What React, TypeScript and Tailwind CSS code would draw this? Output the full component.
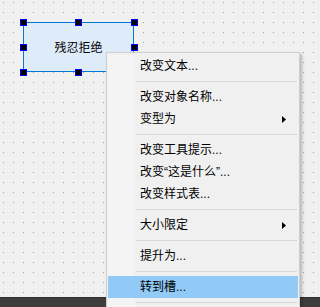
const Sep = () => (
  <div className="flex h-[9px] items-center pl-[28px] pr-[1px]">
    <div className="h-px w-full bg-[#d7d7d7]" />
  </div>
);

const Item = ({
  label,
  sub,
  active,
}: {
  label: string;
  sub?: boolean;
  active?: boolean;
}) => (
  <div
    className={`flex h-[22px] items-center justify-between pl-[32px] pr-[12px] ${
      active ? "bg-[#91c9f7]" : ""
    }`}
  >
    <span className="leading-none">{label}</span>
    {sub ? (
      <svg width="4" height="7" viewBox="0 0 4 7">
        <path d="M0 0 L4 3.5 L0 7 Z" fill="#000" />
      </svg>
    ) : null}
  </div>
);

const Handle = ({ x, y }: { x: string; y: string }) => (
  <div
    className={`absolute h-[7px] w-[7px] border border-[#0000ff] bg-black ${x} ${y}`}
  />
);

const App = () => {
  return (
    <div className="flex h-[307px] w-[320px] flex-col overflow-hidden bg-[#f0f0f0] font-['Liberation_Sans','Noto_Sans_CJK_SC',sans-serif] text-[12px] text-black">
      <div className="relative flex-1 bg-[image:conic-gradient(at_1px_1px,transparent_75%,#a0a0a0_0)] bg-[length:10px_10px] bg-[position:3px_2px]">
        <div className="absolute left-[23px] top-[22px] flex h-[50px] w-[111px] items-center justify-center border border-[#0078d7] bg-[#deecf9]">
          <span className="font-['Noto_Sans_CJK_SC',sans-serif] text-[12px]">
            残忍拒绝
          </span>
        </div>
        <Handle x="left-[20px]" y="top-[19px]" />
        <Handle x="left-[75px]" y="top-[19px]" />
        <Handle x="left-[131px]" y="top-[19px]" />
        <Handle x="left-[20px]" y="top-[44px]" />
        <Handle x="left-[131px]" y="top-[44px]" />
        <Handle x="left-[20px]" y="top-[69px]" />
        <Handle x="left-[75px]" y="top-[69px]" />
        <Handle x="left-[131px]" y="top-[69px]" />

        <div className="absolute left-[106px] top-[52px] z-10 h-[270px] w-[194px] border border-[#cfcfcf] bg-[#f0f0f0] px-[1px] pt-[2px] shadow-[2px_2px_3px_rgba(0,0,0,0.25)]">
          <div className="relative h-full">
            <div className="absolute bottom-0 left-0 top-0 w-[26px] bg-[#f4f4f4]" />
            <div className="relative">
              <Item label="改变文本..." />
              <Sep />
              <Item label="改变对象名称..." />
              <Item label="变型为" sub />
              <Sep />
              <Item label="改变工具提示..." />
              <Item label="改变“这是什么”..." />
              <Item label="改变样式表..." />
              <Sep />
              <Item label="大小限定" sub />
              <Sep />
              <Item label="提升为..." />
              <Sep />
              <Item label="转到槽..." active />
              <Sep />
            </div>
          </div>
        </div>
      </div>
      <div className="h-[10px] border-t border-[#2e2e2e] bg-[#3d3d3d]" />
    </div>
  );
};

export default App;
